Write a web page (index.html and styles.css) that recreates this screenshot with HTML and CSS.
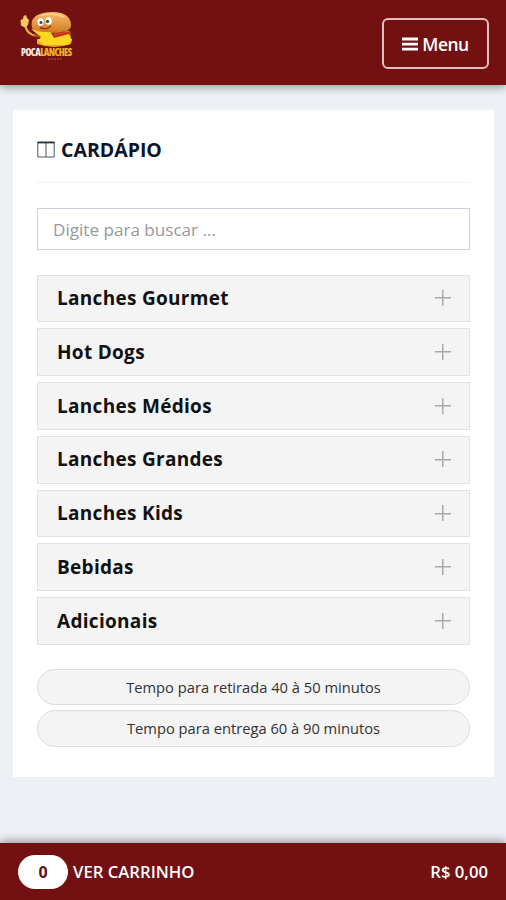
FILE: index.html
```html
<!DOCTYPE html>
<html lang="pt-BR">
<head>
    <meta charset="UTF-8">
    <meta name="viewport" content="width=device-width, initial-scale=1.0">
    <title>Poca Lanches - Cardápio</title>
    <link rel="stylesheet" href="styles.css">
</head>
<body>
    <header class="topbar">
        <svg class="logo" viewBox="0 0 80 70" role="img" aria-label="Poca Lanches">
            <defs>
                <linearGradient id="bun" x1="0" y1="0" x2="0" y2="1">
                    <stop offset="0" stop-color="#f6bf70"/>
                    <stop offset="1" stop-color="#d57a20"/>
                </linearGradient>
            </defs>
            <!-- arm and hand -->
            <path d="M15 24 Q16 34 26 36" fill="none" stroke="#e9b04a" stroke-width="2.2"/>
            <path d="M10.5 20 l2.5-1 .5-3 2.5-1 1 3 2 2-1 5-3 2.5-4-2z" fill="#f5c95c"/>
            <!-- bottom bun and fillings -->
            <path d="M27 39 H62 L61 44 Q44 50 27 44z" fill="#eda42c"/>
            <path d="M24 33 Q40 37 61 31 L61 37 Q42 42 25 37z" fill="#9b4a18"/>
            <path d="M40 35 Q50 30 60 31 L57 37 H41z" fill="#c42f1b"/>
            <path d="M39 33.5 q4-3 8-1 q5-3 12-1" fill="none" stroke="#7fa838" stroke-width="1.6"/>
            <path d="M21 29 L40 31 L44 38 L59 34 L62 40 L58 45 H34 L28 41 L31 37z" fill="#fcd61f"/>
            <path d="M42 34 q8-3 16-2 l-6 3-9 1z" fill="#d23a1e"/>
            <!-- top bun with the face -->
            <path d="M22 28 Q19 15 36 12.5 Q58 10 61 23 Q62 31 53 31 Q44 33 36 32 Q25 32 22 28z" fill="url(#bun)"/>
            <path d="M32 15.5 Q43 12 54 17" fill="none" stroke="#fbd08a" stroke-width="1.5"/>
            <ellipse cx="30.5" cy="22" rx="3.2" ry="3.7" fill="#fff"/>
            <ellipse cx="38.5" cy="21" rx="3.3" ry="3.8" fill="#fff"/>
            <circle cx="31" cy="22.5" r="1.6" fill="#29516a"/>
            <circle cx="37.5" cy="21.5" r="1.7" fill="#29516a"/>
            <path d="M30 27.5 Q36 30.5 41 26" fill="none" stroke="#8e3411" stroke-width="1.4"/>
            <text class="logo-text" x="11" y="56"><tspan fill="#f5e9df">POCA</tspan><tspan fill="#e9b526">LANCHES</tspan></text>
            <path d="M38 59 H53" stroke="#a25a50" stroke-width="1" stroke-dasharray="2 1"/>
        </svg>
        <button class="menu-btn" type="button">
            <svg class="menu-icon" viewBox="0 0 16 14"><path d="M0 2H16M0 7.1H16M0 12.2H16"/></svg>
            <span>Menu</span>
        </button>
    </header>

    <main class="card">
        <h1 class="card-title">
            <svg class="title-icon" viewBox="0 0 18 17"><path d="M.8 1.3H17.2V16H.8zM9 1V16"/><path class="title-icon-top" d="M.5 1.5H17.5"/></svg>
            <span>CARDÁPIO</span>
        </h1>

        <input class="search" type="text" placeholder="Digite para buscar ...">

        <ul class="categories">
            <li class="category"><span>Lanches Gourmet</span><i class="plus"></i></li>
            <li class="category"><span>Hot Dogs</span><i class="plus"></i></li>
            <li class="category"><span>Lanches Médios</span><i class="plus"></i></li>
            <li class="category"><span>Lanches Grandes</span><i class="plus"></i></li>
            <li class="category"><span>Lanches Kids</span><i class="plus"></i></li>
            <li class="category"><span>Bebidas</span><i class="plus"></i></li>
            <li class="category"><span>Adicionais</span><i class="plus"></i></li>
        </ul>

        <div class="times">
            <p class="time">Tempo para retirada 40 à 50 minutos</p>
            <p class="time">Tempo para entrega 60 à 90 minutos</p>
        </div>
    </main>

    <footer class="cart">
        <span class="cart-count">0</span>
        <span class="cart-label">VER CARRINHO</span>
        <span class="cart-total">R$ 0,00</span>
    </footer>
</body>
</html>
```
FILE: styles.css
```css
* {
    box-sizing: border-box;
}

body {
    display: flex;
    flex-direction: column;
    height: 900px;
    margin: 0;
    overflow: hidden;
    background-color: #edf1f5;
    font-family: "Open Sans", sans-serif;
    color: #111;
}

/* Header */
.topbar {
    display: flex;
    justify-content: space-between;
    flex-shrink: 0;
    height: 85px;
    padding: 0 17px 0 10px;
    background-color: #731012;
    box-shadow: 0 2px 9px rgba(0, 0, 0, 0.4);
}

.logo {
    width: 80px;
    height: 70px;
}

.logo-text {
    font-family: "Open Sans", sans-serif;
    font-size: 9.7px;
    font-weight: 800;
    font-stretch: 75%;
    letter-spacing: -0.6px;
}

.menu-btn {
    display: flex;
    align-items: center;
    justify-content: center;
    gap: 4px;
    width: 107px;
    height: 51px;
    margin-top: 18px;
    padding: 0;
    border: 2px solid #e3bfbb;
    border-radius: 6px;
    background: none;
    color: #fff;
    font-family: inherit;
    font-size: 17.5px;
    font-weight: 600;
    letter-spacing: -0.5px;
}

.menu-icon {
    width: 16px;
    height: 14px;
    stroke: #fff;
    stroke-width: 2.8;
}

/* Menu card */
.card {
    height: 667px;
    margin: 25px 12px 0 13px;
    padding: 25px 24px 0;
    background-color: #fff;
}

.card-title {
    display: flex;
    align-items: center;
    gap: 6px;
    height: 48px;
    margin: 0;
    padding-bottom: 18px;
    border-bottom: 1px solid #f2f2f4;
    color: #0c152c;
    font-size: 19.5px;
    font-weight: 700;
}

.title-icon {
    width: 18px;
    height: 17px;
    fill: none;
    stroke: #4a565f;
}

.title-icon-top {
    stroke: #26333e;
    stroke-width: 1.8;
}

.search {
    display: block;
    width: 100%;
    height: 42px;
    margin: 25px 0 24.5px;
    padding: 0 15px;
    border: 1.5px solid #d0d0dc;
    border-radius: 0;
    background-color: #fff;
    font-family: inherit;
    font-size: 17.1px;
}

.search::placeholder {
    color: #999;
}

.categories {
    display: flex;
    flex-direction: column;
    gap: 6px;
    margin: 0;
    padding: 0;
    list-style: none;
}

.category {
    display: flex;
    align-items: center;
    justify-content: space-between;
    height: 47.8px;
    padding: 0 18px 0.6px 19px;
    border: 1.5px solid #e2e2e2;
    background-color: #f4f4f4;
    font-size: 19px;
    font-weight: 700;
    letter-spacing: 0.3px;
}

.plus {
    width: 16px;
    height: 16px;
    background:
        linear-gradient(#aaa, #aaa) center / 16px 1.5px no-repeat,
        linear-gradient(#aaa, #aaa) center / 1.5px 16px no-repeat;
}

.times {
    display: flex;
    flex-direction: column;
    gap: 5px;
    margin-top: 23.5px;
}

.time {
    height: 36.5px;
    margin: 0;
    border: 1px solid #dcdcdc;
    border-radius: 19px;
    background-color: #f4f4f4;
    color: #333;
    font-size: 14.7px;
    line-height: 35px;
    text-align: center;
}

/* Cart bar */
.cart {
    display: flex;
    align-items: center;
    flex-shrink: 0;
    height: 57px;
    margin-top: auto;
    padding: 0 18px;
    background-color: #731012;
    box-shadow: 0 -2px 9px rgba(0, 0, 0, 0.4);
    color: #fff;
    font-size: 16.7px;
    font-weight: 600;
}

.cart-count {
    width: 50px;
    height: 34px;
    margin-right: 5px;
    border-radius: 17px;
    background-color: #fff;
    color: #5c1820;
    font-size: 16px;
    font-weight: 700;
    line-height: 34px;
    text-align: center;
}

.cart-total {
    margin-left: auto;
}
```
